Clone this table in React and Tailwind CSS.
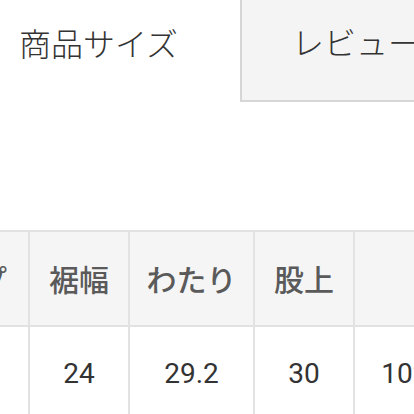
export default function App() {
  const jp = { fontFamily: '"Noto Sans CJK JP", "Noto Sans", sans-serif' };
  const num = { fontFamily: 'Roboto, "Noto Sans CJK JP", sans-serif' };

  const heads = ['ヒップ', '裾幅', 'わたり', '股上', ''];
  const values = ['', '24', '29.2', '30', '102.5'];
  const widths = ['w-[134px]', 'w-[100px]', 'w-[125px]', 'w-[100px]', 'w-[125px]'];

  return (
    <div className="w-[414px] h-[414px] overflow-hidden bg-white" style={jp}>
      <div className="flex h-[102px]">
        <div className="w-[240px] shrink-0 flex items-center pl-[19px] pb-[18px] text-[32px] font-light text-[#333]">
          商品サイズ
        </div>
        <div className="flex-1 flex items-center pl-[50px] pb-[18px] bg-[#f4f4f4] border-l-2 border-b-2 border-[#d6d6d6] text-[32px] font-light text-[#333] whitespace-nowrap">
          レビュー
        </div>
      </div>

      <div className="mt-[128px] -ml-[106px]">
        <table className="table-fixed border-collapse w-[584px]">
          <thead>
            <tr className="h-[95px] bg-[#f5f5f5]">
              {heads.map((h, i) => (
                <th
                  key={i}
                  className={`${widths[i]} border-2 border-[#e2e2e2] text-[30px] font-medium text-[#5a5a5a] text-center`}
                >
                  {h}
                </th>
              ))}
            </tr>
          </thead>
          <tbody>
            <tr className="h-[96px]">
              {values.map((v, i) => (
                <td
                  key={i}
                  className="border-2 border-[#e2e2e2] text-[28px] text-[#333] text-center"
                  style={num}
                >
                  {v}
                </td>
              ))}
            </tr>
          </tbody>
        </table>
      </div>
    </div>
  );
}
